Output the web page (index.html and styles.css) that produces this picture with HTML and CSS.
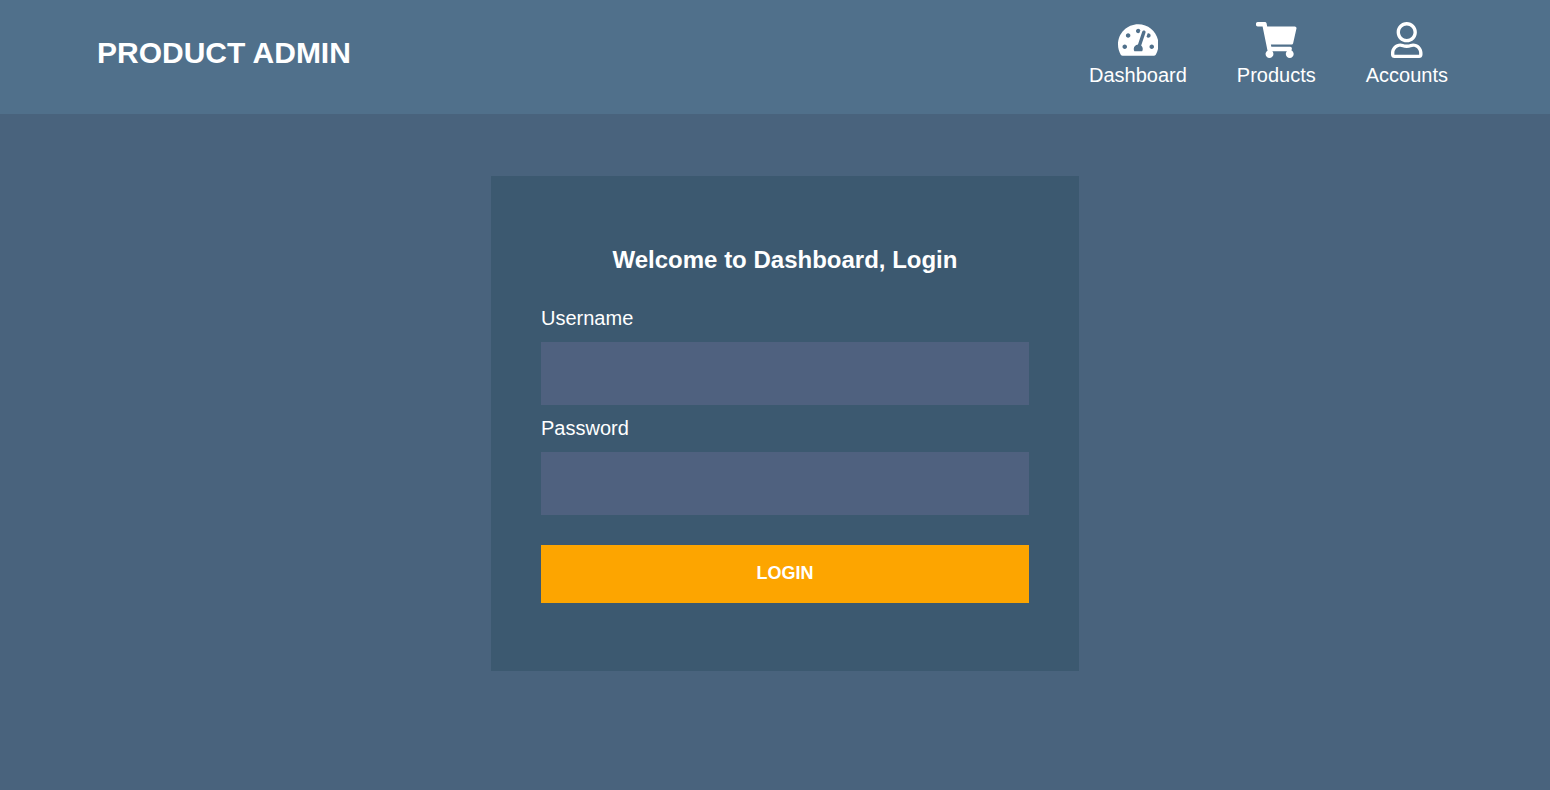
FILE: index.html
```html
<!DOCTYPE html>
<html lang="en">
<head>
<meta charset="utf-8">
<meta name="viewport" content="width=device-width, initial-scale=1">
<title>Product Admin</title>
<link rel="stylesheet" href="styles.css">
</head>
<body>
<header class="header">
  <h1 class="brand">PRODUCT ADMIN</h1>
  <nav class="nav">
    <a class="nav-link" href="#dashboard">
      <svg class="nav-icon" viewBox="0 0 576 512" aria-hidden="true"><path d="M288 32C128.94 32 0 160.94 0 320c0 52.8 14.25 102.26 39.06 144.8 5.61 9.62 16.3 15.2 27.44 15.2h443c11.14 0 21.83-5.58 27.44-15.2C561.75 422.26 576 372.8 576 320c0-159.06-128.94-288-288-288zm0 64c14.71 0 26.58 10.13 30.32 23.65-1.11 2.26-2.64 4.23-3.45 6.67l-9.22 27.67c-5.13 3.49-10.97 6.01-17.64 6.01-17.67 0-32-14.33-32-32S270.33 96 288 96zM96 384c-17.67 0-32-14.33-32-32s14.33-32 32-32 32 14.33 32 32-14.33 32-32 32zm48-160c-17.67 0-32-14.33-32-32s14.33-32 32-32 32 14.33 32 32-14.33 32-32 32zm246.77-72.41l-61.33 184C343.13 347.33 352 364.54 352 384c0 11.72-3.38 22.55-8.88 32H232.88c-5.5-9.45-8.88-20.28-8.88-32 0-33.94 26.5-61.43 59.9-63.59l61.34-184.01c4.17-12.56 17.73-19.45 30.36-15.17 12.57 4.19 19.35 17.79 15.17 30.36zm14.66 57.2l15.52-46.55c3.47-1.29 7.13-2.23 11.05-2.23 17.67 0 32 14.33 32 32s-14.33 32-32 32c-11.38-.01-20.89-6.28-26.57-15.22zM480 384c-17.67 0-32-14.33-32-32s14.33-32 32-32 32 14.33 32 32-14.33 32-32 32z"/></svg>
      <span>Dashboard</span>
    </a>
    <a class="nav-link" href="#products">
      <svg class="nav-icon" viewBox="0 0 576 512" aria-hidden="true"><path d="M528.12 301.319l47.273-208C578.806 78.301 567.391 64 551.99 64H159.208l-9.166-44.81C147.758 8.021 137.93 0 126.529 0H24C10.745 0 0 10.745 0 24v16c0 13.255 10.745 24 24 24h69.883l70.248 343.435C147.325 417.1 136 435.222 136 456c0 30.928 25.072 56 56 56s56-25.072 56-56c0-15.674-6.447-29.835-16.824-40h209.647C430.447 426.165 424 440.326 424 456c0 30.928 25.072 56 56 56s56-25.072 56-56c0-22.172-12.888-41.332-31.579-50.405l5.517-24.276c3.413-15.018-8.002-29.319-23.403-29.319H218.117l-6.545-32h293.145c11.206 0 20.92-7.754 23.403-18.681z"/></svg>
      <span>Products</span>
    </a>
    <a class="nav-link" href="#accounts">
      <svg class="nav-icon" viewBox="0 0 448 512" aria-hidden="true"><path d="M313.6 304c-28.7 0-42.5 16-89.6 16-47.1 0-60.8-16-89.6-16C60.2 304 0 364.2 0 438.4V464c0 26.5 21.5 48 48 48h352c26.5 0 48-21.5 48-48v-25.6c0-74.2-60.2-134.4-134.4-134.4zM400 464H48v-25.6c0-47.6 38.8-86.4 86.4-86.4 14.6 0 38.3 16 89.6 16 51.7 0 74.9-16 89.6-16 47.6 0 86.4 38.8 86.4 86.4V464zM224 288c79.5 0 144-64.5 144-144S303.5 0 224 0 80 64.5 80 144s64.5 144 144 144zm0-240c52.9 0 96 43.1 96 96s-43.1 96-96 96-96-43.1-96-96 43.1-96 96-96z"/></svg>
      <span>Accounts</span>
    </a>
  </nav>
</header>
<main class="main">
  <form class="login">
    <h2 class="login-title">Welcome to Dashboard, Login</h2>
    <label class="login-label" for="username">Username</label>
    <input class="login-input" id="username" name="username" type="text" autocomplete="username">
    <label class="login-label" for="password">Password</label>
    <input class="login-input" id="password" name="password" type="password" autocomplete="current-password">
    <button class="login-button" type="submit">LOGIN</button>
  </form>
</main>
</body>
</html>
```
FILE: styles.css
```css
* {
  box-sizing: border-box;
}

body {
  margin: 0;
  min-height: 100vh;
  background: #49637d;
  color: #fff;
  font-family: Arial, "Liberation Sans", sans-serif;
  font-size: 20px;
  line-height: 23px;
}

.header {
  display: flex;
  flex-wrap: wrap;
  align-items: center;
  justify-content: space-between;
  gap: 20px;
  padding: 22px 102px 27px 97px;
  background: #50708b;
}

.brand {
  margin: 0;
  padding-bottom: 3px;
  font-size: 30px;
  line-height: 34px;
}

.nav {
  display: flex;
  gap: 50px;
}

.nav-link {
  display: flex;
  flex-direction: column;
  align-items: center;
  gap: 6px;
  color: inherit;
  text-decoration: none;
}

.nav-icon {
  display: block;
  height: 36px;
  fill: currentColor;
}

.main {
  display: flex;
  justify-content: center;
  padding: 62px 0 62px 20px;
}

.login {
  display: flex;
  flex-direction: column;
  gap: 12px;
  width: 100%;
  max-width: 588px;
  padding: 70px 50px 68px;
  background: #3c5970;
}

.login-title {
  margin: 0 0 22px;
  font-size: 24px;
  line-height: 27px;
  text-align: center;
}

.login-input {
  width: 100%;
  padding: 20px;
  border: 0;
  border-radius: 0;
  background: #4f617f;
  color: inherit;
  font: inherit;
}

.login-button {
  margin-top: 18px;
  padding: 17px 18px 19px;
  border: 0;
  background: #fda500;
  color: inherit;
  font: bold 18px/22px Arial, "Liberation Sans", sans-serif;
  cursor: pointer;
}
```
